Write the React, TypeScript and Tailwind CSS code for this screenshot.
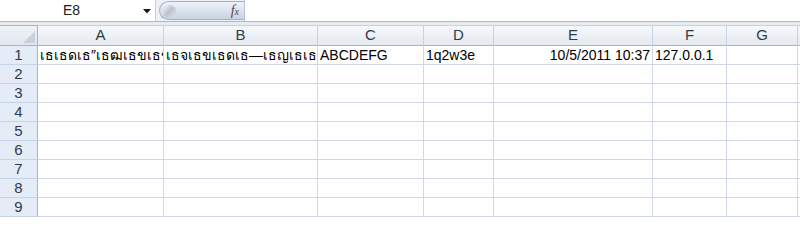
import React from 'react';

// 列名
const COLS = ['A', 'B', 'C', 'D', 'E', 'F', 'G'];

// 第一行数据（乱码泰文按截图原样保留）
const ROW1: { text: string; align: 'left' | 'right' }[] = [
  {
    text: '\u0E40\u0E18\u0E40\u0E18\u0E14\u0E40\u0E18\u2033\u0E40\u0E18\u0E12\u0E40\u0E18\u0E02\u0E40\u0E18\u0E02',
    align: 'left',
  },
  {
    text: '\u0E40\u0E18\u0E08\u0E40\u0E18\u0E02\u0E40\u0E18\u0E14\u0E40\u0E18\u2014\u0E40\u0E18\u0E0D\u0E40\u0E18\u0E40\u0E18\u0E24',
    align: 'left',
  },
  { text: 'ABCDEFG', align: 'left' },
  { text: '1q2w3e', align: 'left' },
  { text: '10/5/2011 10:37', align: 'right' },
  { text: '127.0.0.1', align: 'left' },
  { text: '', align: 'left' },
];

const ROWS = [1, 2, 3, 4, 5, 6, 7, 8, 9];

export default function App() {
  return (
    <div
      className="w-[800px] h-[218px] overflow-hidden bg-white text-black"
      style={{ fontFamily: '"Liberation Sans", Arial, sans-serif' }}
    >
      {/* 名称框 + 编辑栏 */}
      <div className="flex h-[22px] border-b border-[#a9b8ca] bg-[#eef2f7]">
        <div className="relative flex w-[156px] items-center justify-center border-r border-[#c3cfdd] bg-white text-[14px] text-[#222]">
          <span className="-ml-[12px]">E8</span>
          <svg className="absolute right-[4px] top-[9px]" width="8" height="5" viewBox="0 0 8 5">
            <path d="M0 0 H8 L4 4.5 Z" fill="#1a1a1a" />
          </svg>
        </div>
        <div className="w-[3px]" />
        <div className="relative my-[1px] flex w-[85px] items-center justify-end rounded-l-full border border-r-0 border-[#9fb1c6] bg-gradient-to-b from-[#eef2f8] via-[#dbe3ee] to-[#c9d4e2] pr-[5px]">
          <div className="absolute left-[3px] top-[3px] h-[13px] w-[13px] rounded-full bg-gradient-to-br from-[#f7f8fa] via-[#bcc3cc] to-[#e4e8ee]" />
          <span
            className="text-[14px] italic text-[#4a4a4a]"
            style={{ fontFamily: '"Liberation Serif", "Times New Roman", serif' }}
          >
            f<span className="text-[10px]">x</span>
          </span>
        </div>
        <div className="flex-1 border-l border-[#b6c4d4] bg-white" />
      </div>
      <div className="h-[3px] bg-[#e7ecf3]" />

      {/* 表格 */}
      <div className="grid grid-cols-[38px_126px_154px_106px_70px_159px_74px_71px_1fr] text-[14px]">
        {/* 左上角 */}
        <div className="relative h-[21px] border-t border-r border-b border-[#9eb6ce] bg-gradient-to-b from-[#f0f3f8] to-[#e0e6ee]">
          <svg className="absolute bottom-[2px] right-[2px]" width="12" height="12" viewBox="0 0 12 12">
            <path d="M12 0 V12 H0 Z" fill="#c8d1dc" />
          </svg>
        </div>
        {COLS.map((c) => (
          <div
            key={c}
            className="flex h-[21px] items-center justify-center border-t border-r border-b border-t-[#c5d3e3] border-r-[#c5d3e3] border-b-[#9eb6ce] bg-gradient-to-b from-[#f6f8fb] to-[#e4e9f0] text-[15px] text-[#2f3b4a]"
          >
            {c}
          </div>
        ))}
        <div className="h-[21px] border-t border-b border-t-[#c5d3e3] border-b-[#9eb6ce] bg-gradient-to-b from-[#f6f8fb] to-[#e4e9f0]" />

        {ROWS.map((r) => (
          <React.Fragment key={r}>
            <div className="flex h-[19px] items-center justify-center border-r border-b border-r-[#9eb6ce] border-b-[#c5d3e3] bg-[#e4ecf7] text-[15px] text-[#2f3b4a]">
              {r}
            </div>
            {COLS.map((c, i) => {
              const cell = r === 1 ? ROW1[i] : null;
              return (
                <div
                  key={c}
                  className={`flex h-[19px] items-center overflow-hidden whitespace-nowrap border-r border-b border-[#d0d7e5] px-[2px] ${
                    cell?.align === 'right' ? 'justify-end' : 'justify-start'
                  }`}
                >
                  {cell?.text}
                </div>
              );
            })}
            <div className="h-[19px] border-b border-[#d0d7e5]" />
          </React.Fragment>
        ))}
      </div>
    </div>
  );
}
